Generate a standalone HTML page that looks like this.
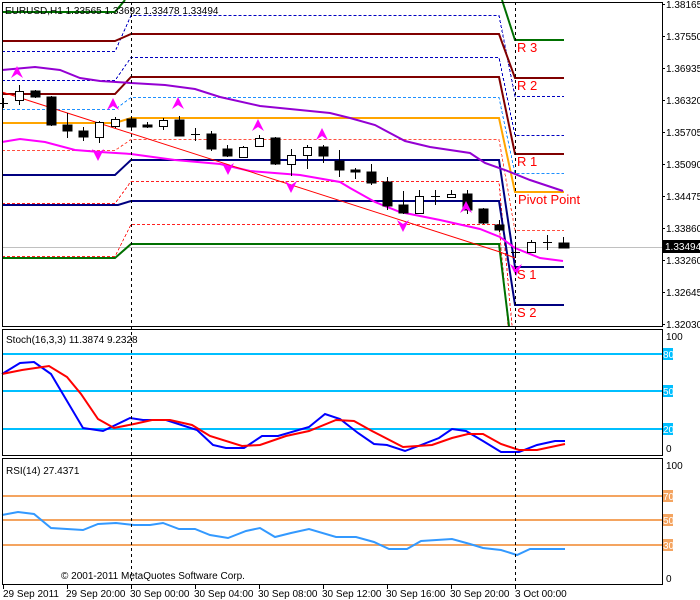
<!DOCTYPE html>
<html><head><style>html,body{margin:0;padding:0;background:#fff}svg{display:block}text{font-family:"Liberation Sans",sans-serif;font-size:10px}</style></head><body>
<svg width="700" height="600" viewBox="0 0 700 600" xmlns="http://www.w3.org/2000/svg" shape-rendering="crispEdges">
<rect width="700" height="600" fill="#fff"/>
<g fill="none" stroke-width="1">
<line x1="2" y1="247.5" x2="662" y2="247.5" stroke="#c0c0c0"/>
<g stroke-dasharray="3,2">
<polyline stroke="#0000c0" points="2,51.5 115,51.5 131,15.5 499,15.5 515,96.5 564,96.5"/>
<polyline stroke="#0000c0" points="2,80.5 115,80.5 131,57.5 499,57.5 515,135.5 564,135.5"/>
<polyline stroke="#1e90ff" points="2,109.5 115,109.5 131,97.5 499,97.5 515,173.5 564,173.5"/>
<polyline stroke="#ff5040" points="2,150.5 115,150.5 131,139.5 499,139.5 515,230.5 564,230.5"/>
<polyline stroke="#ff2020" points="2,203.5 115,203.5 131,181.5 499,181.5 512,326"/>
<polyline stroke="#ff2020" points="2,256.5 115,256.5 131,224.5 499,224.5 508,326"/>
</g>
<g stroke-width="2" shape-rendering="auto">
<polyline stroke="#007000" points="2,12 115,12 125,0"/>
<polyline stroke="#007000" points="502,0 515,40 564,40"/>
<polyline stroke="#800000" points="2,41 115,41 131,34 499,34 515,78 564,78"/>
<polyline stroke="#800000" points="2,94 115,94 131,77 499,77 515,154 564,154"/>
<polyline stroke="#ffa500" points="2,123 115,123 131,118 499,118 515,192 564,192"/>
<polyline stroke="#000080" points="2,175 115,175 131,160 499,160 515,267 564,267"/>
<polyline stroke="#000080" points="2,205 118,205 131,201 499,201 515,305 564,305"/>
<polyline stroke="#007000" points="2,258 115,258 131,244 499,244 509,326"/>
<polyline stroke="#9400d3" points="2,70 35,67 60,70 80,78 100,81 131,83 165,85 195,89 220,97 260,106 300,110 330,113 350,118 375,125 405,141 430,147 470,153 485,163 505,170 530,180 563,191"/>
<polyline stroke="#ff00ff" points="2,142 20,139 45,142 75,150 100,152 131,154 175,160 220,164 250,171 300,175 340,182 350,188 375,202 400,212 440,220 480,229 500,237 515,248 540,258 563,261"/>
</g>
<polyline stroke="#ff0000" shape-rendering="auto" points="2,92 500,252 515,258"/>
</g>
<g stroke="#000" stroke-width="1">
<line x1="3.5" y1="98" x2="3.5" y2="108"/><line x1="0" y1="103.5" x2="8" y2="103.5"/>
<line x1="19.5" y1="85" x2="19.5" y2="105"/><rect x="15.5" y="91.5" width="8" height="9" fill="#fff"/>
<line x1="35.5" y1="90" x2="35.5" y2="98"/><rect x="31" y="91" width="9" height="6" fill="#000"/>
<line x1="51.5" y1="96" x2="51.5" y2="126"/><rect x="47" y="97" width="9" height="28" fill="#000"/>
<line x1="67.5" y1="113" x2="67.5" y2="138"/><rect x="63" y="125" width="9" height="6" fill="#000"/>
<line x1="83.5" y1="127" x2="83.5" y2="141"/><rect x="79" y="131" width="9" height="6" fill="#000"/>
<line x1="99.5" y1="121" x2="99.5" y2="143"/><rect x="95.5" y="122.5" width="8" height="15" fill="#fff"/>
<line x1="115.5" y1="117" x2="115.5" y2="128"/><rect x="111.5" y="119.5" width="8" height="7" fill="#fff"/>
<line x1="131.5" y1="117" x2="131.5" y2="128"/><rect x="127" y="119" width="9" height="8" fill="#000"/>
<line x1="147.5" y1="122" x2="147.5" y2="128"/><rect x="143" y="125" width="9" height="2" fill="#000"/>
<line x1="163.5" y1="118" x2="163.5" y2="130"/><rect x="159.5" y="120.5" width="8" height="6" fill="#fff"/>
<line x1="179.5" y1="116" x2="179.5" y2="136"/><rect x="175" y="120" width="9" height="16" fill="#000"/>
<line x1="195.5" y1="128" x2="195.5" y2="141"/><line x1="191" y1="134.5" x2="200" y2="134.5"/>
<line x1="211.5" y1="131" x2="211.5" y2="151"/><rect x="207" y="134" width="9" height="15" fill="#000"/>
<line x1="227.5" y1="145" x2="227.5" y2="157"/><rect x="223" y="149" width="9" height="7" fill="#000"/>
<line x1="243.5" y1="146" x2="243.5" y2="158"/><rect x="239.5" y="147.5" width="8" height="10" fill="#fff"/>
<line x1="259.5" y1="135" x2="259.5" y2="147"/><rect x="255.5" y="138.5" width="8" height="8" fill="#fff"/>
<line x1="275.5" y1="137" x2="275.5" y2="165"/><rect x="271" y="138" width="9" height="26" fill="#000"/>
<line x1="291.5" y1="149" x2="291.5" y2="176"/><rect x="287.5" y="155.5" width="8" height="9" fill="#fff"/>
<line x1="307.5" y1="145" x2="307.5" y2="169"/><rect x="303.5" y="147.5" width="8" height="8" fill="#fff"/>
<line x1="323.5" y1="145" x2="323.5" y2="163"/><rect x="319" y="147" width="9" height="9" fill="#000"/>
<line x1="339.5" y1="150" x2="339.5" y2="177"/><rect x="335" y="161" width="9" height="9" fill="#000"/>
<line x1="355.5" y1="168" x2="355.5" y2="179"/><rect x="351" y="170" width="9" height="2" fill="#000"/>
<line x1="371.5" y1="164" x2="371.5" y2="185"/><rect x="367" y="172" width="9" height="11" fill="#000"/>
<line x1="387.5" y1="177" x2="387.5" y2="210"/><rect x="383" y="182" width="9" height="24" fill="#000"/>
<line x1="403.5" y1="191" x2="403.5" y2="214"/><rect x="399" y="205" width="9" height="8" fill="#000"/>
<line x1="419.5" y1="190" x2="419.5" y2="214"/><rect x="415.5" y="196.5" width="8" height="17" fill="#fff"/>
<line x1="435.5" y1="190" x2="435.5" y2="205"/><line x1="431" y1="196.5" x2="440" y2="196.5"/>
<line x1="451.5" y1="190" x2="451.5" y2="198"/><rect x="447.5" y="194.5" width="8" height="3" fill="#fff"/>
<line x1="467.5" y1="190" x2="467.5" y2="214"/><rect x="463" y="194" width="9" height="16" fill="#000"/>
<line x1="483.5" y1="208" x2="483.5" y2="224"/><rect x="479" y="209" width="9" height="14" fill="#000"/>
<line x1="499.5" y1="220" x2="499.5" y2="232"/><rect x="495" y="225" width="9" height="5" fill="#000"/>
<line x1="515.5" y1="245" x2="515.5" y2="258"/><line x1="511" y1="252.5" x2="520" y2="252.5"/>
<line x1="531.5" y1="240" x2="531.5" y2="253"/><rect x="527.5" y="242.5" width="8" height="10" fill="#fff"/>
<line x1="547.5" y1="235" x2="547.5" y2="250"/><line x1="543" y1="242.5" x2="552" y2="242.5"/>
<line x1="563.5" y1="237" x2="563.5" y2="248"/><rect x="559" y="243" width="10" height="5" fill="#000"/>
</g>
<g fill="#ff00ff" shape-rendering="auto">
<path d="M17,66 L23,78 L17,74 L11,78Z"/><path d="M113,98 L119,110 L113,106 L107,110Z"/>
<path d="M178,97 L184,109 L178,105 L172,109Z"/><path d="M258,119 L264,131 L258,127 L252,131Z"/>
<path d="M322,128 L328,140 L322,136 L316,140Z"/><path d="M466,201 L472,213 L466,209 L460,213Z"/>
<path d="M98,161 L104,149 L98,153 L92,149Z"/><path d="M228,175 L234,163 L228,167 L222,163Z"/>
<path d="M291,193 L297,181 L291,185 L285,181Z"/><path d="M403,232 L409,220 L403,224 L397,220Z"/>
<path d="M516,276 L522,264 L516,268 L510,264Z"/>
</g>
<g fill="#ff0000">
<text x="517" y="52" style="font-size:13px">R 3</text>
<text x="517" y="90" style="font-size:13px">R 2</text>
<text x="517" y="166" style="font-size:13px">R 1</text>
<text x="518" y="204" style="font-size:13px">Pivot Point</text>
<text x="517" y="279" style="font-size:13px">S 1</text>
<text x="517" y="317" style="font-size:13px">S 2</text>
</g>
<text x="5" y="14">EURUSD,H1  1.33565 1.33692 1.33478 1.33494</text>
<g stroke="#00bfff" stroke-width="2"><line x1="3" y1="354" x2="662" y2="354"/><line x1="3" y1="391" x2="662" y2="391"/><line x1="3" y1="429" x2="662" y2="429"/></g>
<g fill="none" stroke-width="2" shape-rendering="auto">
<polyline stroke="#0000ff" points="2,374 20,363 34,362 51,374 83,428 103,431 130,418 143,420 166,420 197,430 213,445 226,448 244,448 262,436 278,436 309,427 325,414 340,419 358,433 374,444 387,445 405,451 421,445 439,438 452,429 466,431 483,441 501,452 519,452 537,445 555,441 565,441"/>
<polyline stroke="#ff0000" points="2,374 22,370 49,366 67,377 81,394 98,419 114,428 134,424 152,420 170,420 192,425 210,436 242,446 260,445 286,436 309,431 336,420 354,421 372,431 403,447 432,445 452,438 468,434 483,434 501,444 519,450 537,450 565,444"/>
</g>
<text x="6" y="343">Stoch(16,3,3) 11.3874 9.2328</text>
<g stroke="#f4a460" stroke-width="2"><line x1="3" y1="496" x2="662" y2="496"/><line x1="3" y1="520" x2="662" y2="520"/><line x1="3" y1="545" x2="662" y2="545"/></g>
<polyline fill="none" stroke="#3399ff" stroke-width="2" shape-rendering="auto" points="2,515 18,512 34,514 51,528 83,530 98,524 116,523 134,525 150,525 163,523 179,529 195,529 210,535 228,538 246,531 260,528 275,537 291,533 309,529 336,537 356,537 374,542 389,549 407,549 421,541 452,539 470,544 483,548 501,550 517,555 530,549 565,549"/>
<text x="6" y="474">RSI(14) 27.4371</text>
<text x="61" y="579">© 2001-2011 MetaQuotes Software Corp.</text>
<g stroke="#000" stroke-dasharray="3,3"><line x1="131.5" y1="2" x2="131.5" y2="584"/><line x1="515.5" y1="2" x2="515.5" y2="584"/></g>
<g fill="none" stroke="#000"><rect x="2.5" y="2.5" width="660" height="324"/><rect x="2.5" y="329.5" width="660" height="126"/><rect x="2.5" y="458.5" width="660" height="126"/></g>
<g>
<text x="666" y="8">1.38165</text><text x="666" y="40">1.37550</text><text x="666" y="72">1.36935</text><text x="666" y="104">1.36320</text><text x="666" y="136">1.35705</text><text x="666" y="168">1.35090</text><text x="666" y="200">1.34475</text><text x="666" y="232">1.33860</text><text x="666" y="264">1.33260</text><text x="666" y="296">1.32645</text><text x="666" y="328">1.32030</text>
<rect x="663" y="240" width="37" height="13" fill="#000"/><text x="665" y="250" fill="#fff">1.33494</text>
</g>
<g stroke="#000"><line x1="662" y1="4.5" x2="665" y2="4.5"/><line x1="662" y1="36.5" x2="665" y2="36.5"/><line x1="662" y1="68.5" x2="665" y2="68.5"/><line x1="662" y1="100.5" x2="665" y2="100.5"/><line x1="662" y1="132.5" x2="665" y2="132.5"/><line x1="662" y1="164.5" x2="665" y2="164.5"/><line x1="662" y1="196.5" x2="665" y2="196.5"/><line x1="662" y1="228.5" x2="665" y2="228.5"/><line x1="662" y1="260.5" x2="665" y2="260.5"/><line x1="662" y1="292.5" x2="665" y2="292.5"/><line x1="662" y1="324.5" x2="665" y2="324.5"/></g>
<text x="666" y="340">100</text><text x="666" y="452">0</text>
<rect x="663" y="348" width="10" height="12" fill="#00bfff"/><text x="663" y="358" fill="#fff">80</text>
<rect x="663" y="385" width="10" height="12" fill="#00bfff"/><text x="663" y="395" fill="#fff">50</text>
<rect x="663" y="423" width="10" height="12" fill="#00bfff"/><text x="663" y="433" fill="#fff">20</text>
<text x="666" y="469">100</text><text x="666" y="582">0</text>
<rect x="663" y="490" width="10" height="12" fill="#f4a460"/><text x="663" y="500" fill="#fff">70</text>
<rect x="663" y="514" width="10" height="12" fill="#f4a460"/><text x="663" y="524" fill="#fff">50</text>
<rect x="663" y="539" width="10" height="12" fill="#f4a460"/><text x="663" y="549" fill="#fff">30</text>
<g stroke="#000"><line x1="3.5" y1="585" x2="3.5" y2="589"/><line x1="67.5" y1="585" x2="67.5" y2="589"/><line x1="131.5" y1="585" x2="131.5" y2="589"/><line x1="195.5" y1="585" x2="195.5" y2="589"/><line x1="259.5" y1="585" x2="259.5" y2="589"/><line x1="323.5" y1="585" x2="323.5" y2="589"/><line x1="387.5" y1="585" x2="387.5" y2="589"/><line x1="451.5" y1="585" x2="451.5" y2="589"/><line x1="515.5" y1="585" x2="515.5" y2="589"/></g>
<g><text x="3" y="597">29 Sep 2011</text><text x="66" y="597">29 Sep 20:00</text><text x="130" y="597">30 Sep 00:00</text><text x="194" y="597">30 Sep 04:00</text><text x="258" y="597">30 Sep 08:00</text><text x="322" y="597">30 Sep 12:00</text><text x="386" y="597">30 Sep 16:00</text><text x="450" y="597">30 Sep 20:00</text><text x="515" y="597">3 Oct 00:00</text></g>
</svg>
</body></html>
